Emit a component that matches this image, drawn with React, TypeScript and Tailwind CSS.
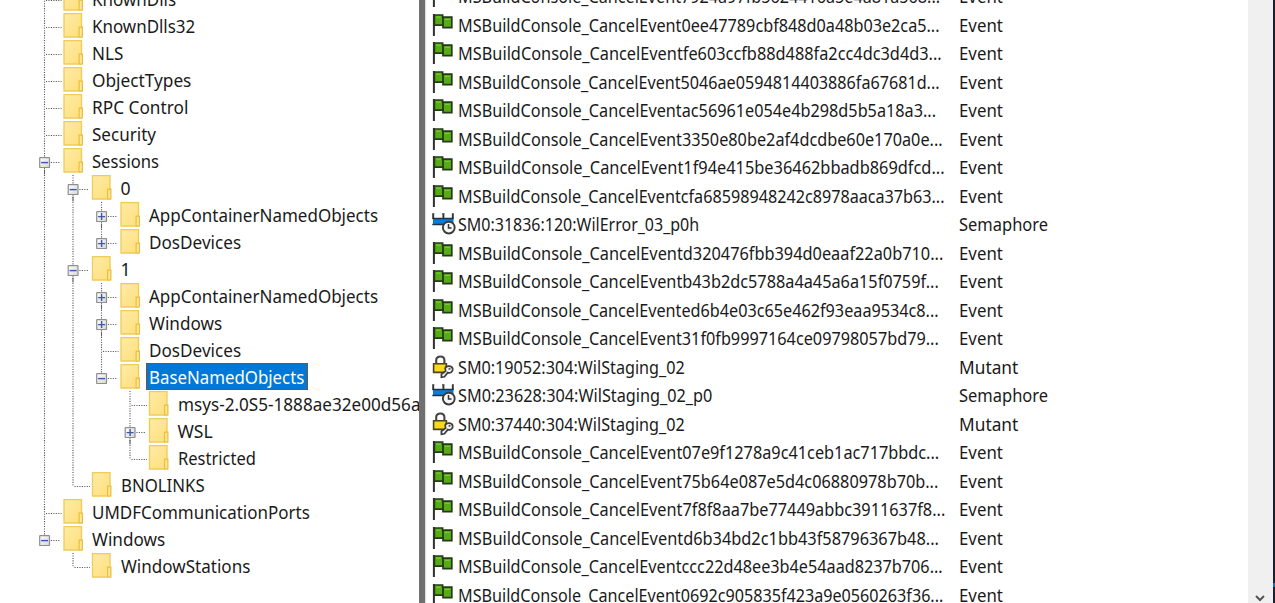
import { useLayoutEffect, useRef, useState } from "react";
import type { ReactNode } from "react";

type Box = "plus" | "minus";

interface Node {
  label: string;
  level: number;
  width: number;
  box?: Box;
  last?: boolean;
  /** Ancestor levels whose guide line passes through this row. */
  through?: number[];
  selected?: boolean;
}

const nodes: Node[] = [
  { label: "KnownDlls", level: 0, width: 84 },
  { label: "KnownDlls32", level: 0, width: 103 },
  { label: "NLS", level: 0, width: 31 },
  { label: "ObjectTypes", level: 0, width: 99 },
  { label: "RPC Control", level: 0, width: 96 },
  { label: "Security", level: 0, width: 64 },
  { label: "Sessions", level: 0, width: 67, box: "minus" },
  { label: "0", level: 1, width: 10, box: "minus", through: [0] },
  { label: "AppContainerNamedObjects", level: 2, width: 229, box: "plus", through: [0, 1] },
  { label: "DosDevices", level: 2, width: 92.5, box: "plus", last: true, through: [0, 1] },
  { label: "1", level: 1, width: 10, box: "minus", through: [0] },
  { label: "AppContainerNamedObjects", level: 2, width: 229, box: "plus", through: [0, 1] },
  { label: "Windows", level: 2, width: 73, box: "plus", through: [0, 1] },
  { label: "DosDevices", level: 2, width: 92.5, through: [0, 1] },
  { label: "BaseNamedObjects", level: 2, width: 155, box: "minus", last: true, through: [0, 1], selected: true },
  { label: "msys-2.0S5-1888ae32e00d56aa", level: 3, width: 252, through: [0, 1] },
  { label: "WSL", level: 3, width: 35, box: "plus", through: [0, 1] },
  { label: "Restricted", level: 3, width: 78, last: true, through: [0, 1] },
  { label: "BNOLINKS", level: 1, width: 84, last: true, through: [0] },
  { label: "UMDFCommunicationPorts", level: 0, width: 218 },
  { label: "Windows", level: 0, width: 73, box: "minus", last: true },
  { label: "WindowStations", level: 1, width: 129, last: true },
];

type Kind = "Event" | "Semaphore" | "Mutant";

const cancel = (id: string, width: number): [string, Kind, number] => [
  "MSBuildConsole_CancelEvent" + id + "...",
  "Event",
  width,
];

const objects: [string, Kind, number][] = [
  cancel("7924a97fb5624416a5e4a81a568", 482),
  cancel("0ee47789cbf848d0a48b03e2ca5", 482),
  cancel("fe603ccfb88d488fa2cc4dc3d4d3", 484),
  cancel("5046ae0594814403886fa67681d", 482),
  cancel("ac56961e054e4b298d5b5a18a3", 478),
  cancel("3350e80be2af4dcdbe60e170a0e", 485),
  cancel("1f94e415be36462bbadb869dfcd", 487),
  cancel("cfa68598948242c8978aaca37b63", 487),
  ["SM0:31836:120:WilError_03_p0h", "Semaphore", 241],
  cancel("d320476fbb394d0eaaf22a0b710", 485),
  cancel("b43b2dc5788a4a45a6a15f0759f", 481),
  cancel("ed6b4e03c65e462f93eaa9534c8", 481),
  cancel("31f0fb9997164ce09798057bd79", 481),
  ["SM0:19052:304:WilStaging_02", "Mutant", 227],
  ["SM0:23628:304:WilStaging_02_p0", "Semaphore", 254],
  ["SM0:37440:304:WilStaging_02", "Mutant", 227],
  cancel("07e9f1278a9c41ceb1ac717bbdc", 481),
  cancel("75b64e087e5d4c06880978b70b", 480),
  cancel("7f8f8aa7be77449abbc3911637f8", 487),
  cancel("d6b34bd2c1bb43f58796367b48", 481),
  cancel("ccc22d48ee3b4e54aad8237b706", 485),
  cancel("0692c905835f423a9e0560263f36", 485),
];

const typeWidths: Record<Kind, number> = { Event: 44, Semaphore: 89, Mutant: 59 };

/** Condenses a line of text horizontally so that it fills the given width. */
function Fit({ width, children }: { width: number; children: ReactNode }) {
  const ref = useRef<HTMLSpanElement>(null);
  const [scale, setScale] = useState(1);
  useLayoutEffect(() => {
    if (ref.current) setScale(width / ref.current.offsetWidth);
  }, [width]);
  return (
    <span className="block shrink-0 whitespace-nowrap" style={{ width }}>
      <span ref={ref} className="inline-block origin-left" style={{ transform: `scaleX(${scale})` }}>
        {children}
      </span>
    </span>
  );
}

const STEP = 28.5;

function Guides({ node }: { node: Node }) {
  const x = 14.5 + node.level * STEP;
  const fx = 33.5 + node.level * STEP;
  const width = 58 + node.level * STEP;
  const dots = { stroke: "#555555", strokeWidth: 1.1, strokeDasharray: "1.1 1.35" };
  return (
    <svg width={width} height="27" viewBox={`0 -1 ${width} 27`} className="block shrink-0 overflow-visible">
      <defs>
        <linearGradient id="folder" x1="0" y1="0" x2="1" y2="1">
          <stop offset="0" stopColor="#ffeba6" />
          <stop offset="1" stopColor="#ffdf7c" />
        </linearGradient>
        <linearGradient id="button" x1="0" y1="0" x2="1" y2="1">
          <stop offset="0" stopColor="#ffffff" />
          <stop offset="1" stopColor="#d6d6d6" />
        </linearGradient>
      </defs>
      {(node.through ?? []).map((l) => (
        <line key={l} x1={14.5 + l * STEP} x2={14.5 + l * STEP} y1="0" y2="27" {...dots} />
      ))}
      <line x1={x} x2={x} y1="0" y2={node.last ? 14.5 : 27} {...dots} />
      <line x1={x + 1.5} x2={x + (node.box ? 15 : 17)} y1="14.5" y2="14.5" {...dots} />
      {node.box && (
        <g>
          {!node.last && <line x1={x} x2={x} y1="21.5" y2="26.5" stroke="#606060" strokeWidth="1" />}
          <rect x={x - 4.8} y="9.7" width="9.8" height="9.8" rx="0.6" fill="url(#button)" stroke="#8e8e8e" strokeWidth="1.2" />
          <path
            d={`M${x - 3.4} 14.6h7` + (node.box === "plus" ? `M${x + 0.1} 11.1v7` : "")}
            stroke="#3c57ad"
            strokeWidth="1.4"
          />
        </g>
      )}
      <path d={`M${fx + 0.5} .7h17.5v23.3h-17.5z`} fill="url(#folder)" stroke="#efcb58" strokeWidth="1.3" />
      <path d={`M${fx + 15.6} 14.2h3.3v9.8h-3.3z`} fill="#ffe596" stroke="#e8bf3e" strokeWidth="1.2" />
    </svg>
  );
}

function TreeRow({ node }: { node: Node }) {
  return (
    <div className="flex h-[27px] items-center">
      <Guides node={node} />
      {node.selected ? (
        <div className="ml-px flex h-[27px] shrink-0 items-center border border-[#80502f] bg-[#0078d7] pr-[3px] pl-[2px] text-white">
          <Fit width={node.width}>{node.label}</Fit>
        </div>
      ) : (
        <div className="flex h-[27px] shrink-0 items-center pl-1">
          <Fit width={node.width}>{node.label}</Fit>
        </div>
      )}
    </div>
  );
}

function FlagIcon() {
  return (
    <svg width="22" height="24" viewBox="0 0 22 24" className="block">
      <path d="M1.9 1v22" stroke="#303030" strokeWidth="2" />
      <path d="M2.4 2h8.2v2.2h9.2v10.4H11v-2.4H2.4z" fill="#57ac16" stroke="#263817" strokeWidth="1.7" />
      <path d="M11 4v9" stroke="#263817" strokeWidth="1.8" />
      <path d="M4 4.2h5M12.8 6.5h5" stroke="#79ca35" strokeWidth="1.2" />
    </svg>
  );
}

function SemaphoreIcon() {
  return (
    <svg width="24" height="24" viewBox="0 0 24 24" className="block">
      <path d="M1 6.6h20.5v6H1z" fill="#0c7bd9" />
      <path d="M1.2 1.5v5M11.4 1.5v5M20.8 1.5v5" stroke="#333" strokeWidth="1.9" />
      <path d="M0.3 6.5h21.4" stroke="#1d3448" strokeWidth="1.5" />
      <path d="M0.3 12.5h12" stroke="#1d3448" strokeWidth="1.5" />
      <path d="M0.3 1.8h2M10 1.8h2.4M20 1.8h1.7" stroke="#555" strokeWidth="1.2" />
      <circle cx="16.8" cy="15.6" r="5.9" fill="#f7f7f7" stroke="#3b3b3b" strokeWidth="1.9" />
      <path d="M16.5 12v4h3" fill="none" stroke="#333" strokeWidth="1.5" />
    </svg>
  );
}

function MutantIcon() {
  return (
    <svg width="24" height="24" viewBox="0 0 24 24" className="block">
      <path d="M4.2 9.5V5.2C4.2.2 12.4.2 12.4 5.2V9.5" fill="none" stroke="#444" strokeWidth="2.1" />
      <path d="M1.6 8.8h12.8v8.6H1.6z" fill="#f9d91c" stroke="#4b4520" strokeWidth="1.6" />
      <path
        d="M13.2 13.3c.8-3 6.8-2.8 7.5.4.5 3-2.4 4.7-4.9 3.9l-3.4 4.2-3 .5v-3.1l4.2-3.1z"
        fill="#f2f2f2"
        stroke="#3d3d3d"
        strokeWidth="1.7"
      />
      <path d="M16.5 13.9h2" stroke="#444" strokeWidth="1.5" />
    </svg>
  );
}

const icons: Record<Kind, () => ReactNode> = {
  Event: FlagIcon,
  Semaphore: SemaphoreIcon,
  Mutant: MutantIcon,
};

function ObjectRow({ name, kind, width }: { name: string; kind: Kind; width: number }) {
  const Icon = icons[kind];
  return (
    <div className="flex h-[28.5px] items-center">
      <div className="w-[26px] shrink-0">
        <Icon />
      </div>
      <div className="w-[501px] shrink-0">
        <Fit width={width}>{name}</Fit>
      </div>
      <Fit width={typeWidths[kind]}>{kind}</Fit>
    </div>
  );
}

export default function App() {
  return (
    <div className="flex h-[603px] w-[1275px] overflow-hidden bg-white font-['Noto_Sans','Open_Sans',sans-serif] text-[17.6px] leading-[26px] text-[#1a1a1a]">
      <div className="w-[419px] shrink-0 overflow-hidden pl-[30px]">
        <div className="-mt-[15px]">
          {nodes.map((node, i) => (
            <TreeRow key={i} node={node} />
          ))}
        </div>
      </div>
      <div className="w-[6px] shrink-0 bg-[#707070]" />
      <div className="w-px shrink-0 bg-[#dcdcdc]" />
      <div className="min-w-0 flex-1 overflow-hidden pl-[6px]">
        <div className="-mt-[18px]">
          {objects.map(([name, kind, width]) => (
            <ObjectRow key={name} name={name} kind={kind} width={width} />
          ))}
        </div>
      </div>
      <div className="flex w-[25px] shrink-0 items-end justify-center bg-[#f0f0f0]">
        <svg width="10" height="9" viewBox="0 0 10 9" className="mr-[2px] block">
          <path d="M1 2l4 4 4-4" fill="none" stroke="#555" strokeWidth="2" />
        </svg>
      </div>
      <div className="flex w-[2px] shrink-0 flex-col justify-end bg-[#1f1f2b] pb-[16px]">
        <div className="h-[4px] bg-[#1b6ea5]" />
      </div>
    </div>
  );
}
